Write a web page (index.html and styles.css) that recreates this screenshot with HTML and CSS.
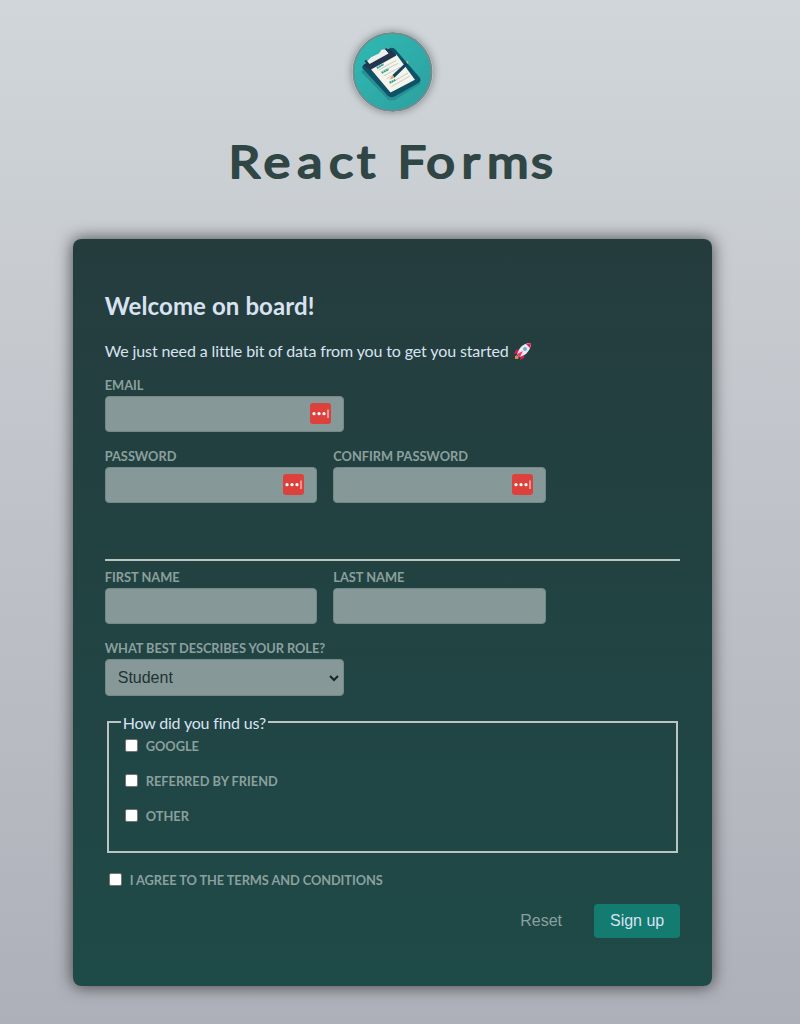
FILE: index.html
```
<!DOCTYPE html>
<html lang="en">
<head>
<meta charset="utf-8">
<title>React Forms</title>
<link rel="stylesheet" href="styles.css">
</head>
<body>
<header class="header">
  <svg class="logo" viewBox="0 0 82 82" aria-hidden="true">
    <defs><linearGradient id="teal" x1="0" y1="0" x2="1" y2="1"><stop offset="0" stop-color="#2fbab3"/><stop offset="1" stop-color="#2d9f9f"/></linearGradient></defs>
    <circle cx="41" cy="41" r="40" fill="url(#teal)" stroke="#718c8d" stroke-width="2"/>
    <path d="M9 41L37 70L43 70L70 53L66 45L14 35Z" fill="#298f91"/>
    <path d="M11 34Q9 36 11 38L36 65Q39 68 43 66L68 52Q71 50 69 47L44 18Q41 15 38 17Z" fill="#0d5267"/>
    <path d="M17 36L39 62L64 49L45 23Z" fill="#f5f5ec"/>
    <path d="M11 34L38 17L45 24L18 39Z" fill="#24354f"/>
    <path d="M15 30L17 33L37 22L34 18L30 18L27 22L19 26Z" fill="#edf0ef"/>
    <path d="M13 29L18 35M34 17L39 22" stroke="#24354f" stroke-width="2"/>
    <g fill="none" stroke="#c5cbc8" stroke-width="1"><path d="M27 39L45 29M29 41L47 32M32 45L49 36M35 48L40 45M38 53L57 42M40 56L59 45"/></g>
    <path d="M25 37L32 33M30 42L37 38M38 52L44 49" stroke="#2aa391" stroke-width="2" stroke-dasharray="2 .5"/>
    <path d="M41 44L55 31L57 33L43 47Z" fill="#12435a"/>
    <path d="M38 49L41 44L43 47Z" fill="#e2a26b"/>
    <path d="M55 31L57 29L57 33" fill="#d9ae72"/>
  </svg>
  <h1 class="title"><svg class="title-art" viewBox="0 0 340 60"><text transform="scale(1.15 1)" x="5.7 36 65.5 93 117.3 147.9 152.7 177.7 208.3 230.4 268.6" y="46">React Forms</text></svg></h1>
</header>
<form class="card">
  <h2 class="heading">Welcome on board!</h2>
  <p class="intro"><span class="intro-text">We just need a little bit of data from you to get you started</span>
    <svg class="rocket" viewBox="0 0 18 18" aria-hidden="true"><path d="M6 7L2 8L0 12L5 11ZM11 12L10 16L6 18L7 13Z" fill="#d91e58"/><path d="M17 1Q10 1 6 6L3 12L6 15L12 12Q17 7 17 1Z" fill="#eeeaf2"/><path d="M17 1L12 2L16 6Z" fill="#d91e58"/><path d="M9 9L3 12L6 15Z" fill="#f43668"/><circle cx="11" cy="7" r="2" fill="#6eabcc"/><path d="M3 13L1 14L1 17L4 17L5 15Z" fill="#ec7c4c"/></svg>
  </p>
  <div class="field field-wide">
    <label class="label" for="email">Email</label>
    <div class="control"><input class="input" id="email" type="email"><svg class="badge" viewBox="0 0 21 21"><use href="#pw"/></svg></div>
  </div>
  <div class="row">
    <div class="field">
      <label class="label" for="password">Password</label>
      <div class="control"><input class="input" id="password" type="password"><svg class="badge" viewBox="0 0 21 21"><use href="#pw"/></svg></div>
    </div>
    <div class="field">
      <label class="label" for="confirm">Confirm Password</label>
      <div class="control"><input class="input" id="confirm" type="password"><svg class="badge" viewBox="0 0 21 21"><use href="#pw"/></svg></div>
    </div>
  </div>
  <hr class="rule">
  <div class="row">
    <div class="field"><label class="label" for="first">First Name</label><div class="control"><input class="input" id="first"></div></div>
    <div class="field"><label class="label" for="last">Last Name</label><div class="control"><input class="input" id="last"></div></div>
  </div>
  <div class="field field-wide">
    <label class="label label-tight" for="role">What best describes your role?</label>
    <div class="control control-select"><select class="input select" id="role"><option>Student</option></select><svg class="chevron" viewBox="0 0 10 7"><path d="M1 1L5 5L9 1" fill="none" stroke="#172524" stroke-width="2"/></svg></div>
  </div>
  <fieldset class="sources">
    <legend class="legend">How did you find us?</legend>
    <label class="check"><input class="box" type="checkbox"><span>Google</span></label>
    <label class="check"><input class="box" type="checkbox"><span>Referred by friend</span></label>
    <label class="check"><input class="box" type="checkbox"><span>Other</span></label>
  </fieldset>
  <label class="check terms"><input class="box" type="checkbox"><span>I agree to the terms and conditions</span></label>
  <div class="actions"><button class="btn btn-flat" type="reset">Reset</button><button class="btn btn-main" type="button">Sign up</button></div>
</form>
<svg class="defs" width="0" height="0"><symbol id="pw" viewBox="0 0 21 21"><rect width="21" height="21" rx="3" fill="#dc413b"/><g fill="#fff"><circle cx="4" cy="10.7" r="1.6"/><circle cx="9" cy="10.7" r="1.6"/><circle cx="14" cy="10.7" r="1.6"/><rect x="17.4" y="6.5" width="1.2" height="8.5" fill="#f7caca"/></g></symbol></svg>
</body>
</html>
```
FILE: styles.css
```
* { box-sizing: border-box; }
html { background: linear-gradient(180deg, #d1d6da, #adb0b8); height: 1024px; overflow: hidden; }
body { margin: 0; width: 784.8px; height: 1024px; font-family: Lato, sans-serif; color: #d9e2f1; overflow: visible; }
.header { height: 239px; padding-top: 32px; display: flex; flex-direction: column; align-items: center; }
.logo { width: 81px; height: 80px; margin-bottom: 1px; border-radius: 50%; box-shadow: 0 0 8px rgba(0,0,0,.4); flex: none; }
.title { margin: 19px 0 0; height: 60px; width: 340px; }
.title-art { display: block; width: 340px; height: 60px; }
.title-art text { font: 400 44px Lato, sans-serif; fill: #2f4644; stroke: #2f4644; stroke-width: 2px; stroke-linejoin: round; }
.card { width: 639.4px; height: 747.4px; margin: 0 auto; padding: 51px 32px 0; border-radius: 8px; background: linear-gradient(180deg, #253c3d, #1e4a48); box-shadow: 0 0 16px 1px rgba(0,0,0,.6); }
.heading { margin: 0; font-size: 24px; line-height: 32px; font-weight: 700; letter-spacing: .1px; }
.intro { margin: 17px 0 0; height: 24px; display: flex; align-items: center; gap: 5px; font-size: 16px; line-height: 24px; }
.intro-text { letter-spacing: -.12px; }
.rocket { width: 18px; height: 18px; }
.field { width: 212.6px; }
.field-wide { width: 239.6px; margin-top: 15px; }
.row { display: flex; gap: 16px; margin-top: 17px; }
.label { display: block; height: 18px; font-size: 12.8px; line-height: 15px; font-weight: 700; text-transform: uppercase; color: #8ba09e; white-space: nowrap; }
.label-tight { letter-spacing: -.06px; }
.control { position: relative; height: 36px; }
.input { display: block; width: 100%; height: 100%; margin: 0; padding: 0 12px; border: 1px solid #718987; border-radius: 4px; background: #869998; font: 16px "Liberation Sans", sans-serif; color: #223332; }
.badge { position: absolute; right: 13.2px; top: 7px; width: 21px; height: 21px; }
.rule { margin: 56px 0 0; height: 2px; border: 0; background: #bcc4c2; }
.rule + .row { margin-top: 9px; }
.row + .field-wide { margin-top: 17px; }
.control-select { height: 37px; margin-top: 0; }
.select { appearance: none; }
.chevron { position: absolute; right: 5px; top: 16px; width: 10px; height: 7px; }
.sources { margin: 16px 2px 0; height: 141px; padding: 6px 12px 0; border: 2px solid #bcc4c2; }
.legend { padding: 0 2px; height: 20px; line-height: 21px; font-size: 16px; letter-spacing: -.19px; }
.check { display: flex; align-items: center; height: 15px; margin-bottom: 20px; font-size: 12.8px; line-height: 15px; font-weight: 700; text-transform: uppercase; color: #8ba09e; }
.check span { position: relative; top: 1px; }
.box { appearance: none; width: 13px; height: 13px; margin: 0 8px 0 4px; border: 1px solid #767676; border-radius: 2px; background: #fff; }
.terms { margin: 19px 0 0; width: max-content; letter-spacing: -.07px; }
.actions { display: flex; justify-content: flex-end; gap: 16px; margin-top: 17px; }
.btn { height: 34px; padding: 0; border: 0; border-radius: 4px; font: 16px "Liberation Sans", sans-serif; }
.btn-flat { width: 74px; background: none; color: #8ba09e; }
.btn-main { width: 86px; background: #147b70; color: #d9e2f1; }
.defs { position: absolute; }
```
